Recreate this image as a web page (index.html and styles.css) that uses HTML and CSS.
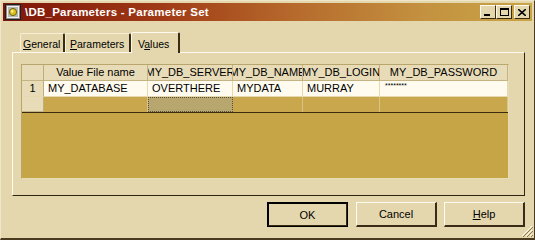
FILE: index.html
```html
<!DOCTYPE html>
<html lang="en">
<head>
    <meta charset="UTF-8" />
    <title>\DB_Parameters - Parameter Set</title>
    <link rel="stylesheet" href="styles.css">
</head>
<body>
    <div class="window">
        <div class="titlebar">
            <svg class="app-icon" width="16" height="16" viewBox="0 0 16 16">
                <rect x="0.5" y="0.5" width="15" height="15" fill="#8a8a8a" stroke="#202020"/>
                <rect x="2.5" y="2.5" width="11" height="11" fill="#b8b8b8" stroke="#f0f0f0"/>
                <circle cx="8" cy="8" r="3.6" fill="#e0c020" stroke="#6a6a10"/>
                <circle cx="7.2" cy="7.2" r="1.2" fill="#fff4a0"/>
            </svg>
            <span class="title">\DB_Parameters - Parameter Set</span>
            <div class="controls">
                <span class="ctl ctl-min"><i></i></span>
                <span class="ctl ctl-max"><i></i></span>
                <span class="ctl ctl-close">
                    <svg width="8" height="7" viewBox="0 0 8 7"><path d="M0 0 L8 7 M8 0 L0 7" stroke="#000" stroke-width="1.6"/></svg>
                </span>
            </div>
        </div>

        <div class="tabs">
            <div class="tab tab-general"><u>G</u>eneral</div>
            <div class="tab tab-params"><u>P</u>arameters</div>
            <div class="tab tab-values active">V<u>a</u>lues</div>
        </div>

        <div class="panel">
            <div class="grid">
                <div class="grid-row head">
                    <div class="cell rh"></div>
                    <div class="cell"><span>Value File name</span></div>
                    <div class="cell"><span>MY_DB_SERVER</span></div>
                    <div class="cell"><span>MY_DB_NAME</span></div>
                    <div class="cell"><span>MY_DB_LOGIN</span></div>
                    <div class="cell"><span>MY_DB_PASSWORD</span></div>
                </div>
                <div class="grid-row data">
                    <div class="cell rh">1</div>
                    <div class="cell">MY_DATABASE</div>
                    <div class="cell">OVERTHERE</div>
                    <div class="cell">MYDATA</div>
                    <div class="cell">MURRAY</div>
                    <div class="cell pwd">********</div>
                </div>
                <div class="grid-row newrow">
                    <div class="cell rh"></div>
                    <div class="cell"></div>
                    <div class="cell focus"></div>
                    <div class="cell"></div>
                    <div class="cell"></div>
                    <div class="cell"></div>
                </div>
                <div class="grid-empty"></div>
            </div>
        </div>

        <div class="buttons">
            <button class="btn default">OK</button>
            <button class="btn">Cancel</button>
            <button class="btn"><u>H</u>elp</button>
        </div>

        <svg class="grip" width="12" height="12" viewBox="0 0 12 12">
            <path d="M11 1 L1 11 M11 5 L5 11 M11 9 L9 11" stroke="#fffaf0" stroke-width="1"/>
            <path d="M12 2 L2 12 M12 6 L6 12 M12 10 L10 12" stroke="#8a7a50" stroke-width="1"/>
        </svg>
    </div>
</body>
</html>
```

FILE: styles.css
```css
* {
    margin: 0;
    padding: 0;
    box-sizing: border-box;
}

body {
    font-family: "Liberation Sans", Arial, sans-serif;
    font-size: 11px;
    background-color: #e4d7ae;
    color: #000;
    width: 535px;
    height: 240px;
    overflow: hidden;
}

.window {
    position: relative;
    width: 535px;
    height: 240px;
    background-color: #e4d7ae;
    border-top: 1px solid #efe6c8;
    border-left: 1px solid #efe6c8;
    border-right: 1px solid #4a3a20;
    border-bottom: 2px solid #4a3a20;
    padding: 2px 2px 0 2px;
}

/* title bar */
.titlebar {
    height: 18px;
    display: flex;
    align-items: center;
    padding-left: 2px;
    background: linear-gradient(to right, #7e1408 0%, #a03a16 30%, #b66a2c 55%, #c49240 80%, #c9a446 100%);
    color: #fff;
}

.app-icon {
    flex: none;
}

.title {
    font-weight: bold;
    font-size: 11.5px;
    margin-left: 4px;
    letter-spacing: 0.25px;
}

.controls {
    margin-left: auto;
    display: flex;
    margin-right: 2px;
}

.ctl {
    width: 16px;
    height: 14px;
    background-color: #e4d7ae;
    border-top: 1px solid #fffaf0;
    border-left: 1px solid #fffaf0;
    border-right: 1px solid #3a2c14;
    border-bottom: 1px solid #3a2c14;
    display: flex;
    align-items: center;
    justify-content: center;
    position: relative;
}

.ctl-max {
    margin-right: 2px;
}

.ctl-min i {
    display: block;
    width: 6px;
    height: 2px;
    background: #000;
    margin-top: 6px;
    margin-left: -2px;
}

.ctl-max i {
    display: block;
    width: 9px;
    height: 8px;
    border: 1px solid #000;
    border-top-width: 2px;
}

/* tabs */
.tabs {
    display: flex;
    align-items: flex-end;
    height: 21px;
    margin-top: 10px;
    padding-left: 17px;
}

.tab {
    height: 19px;
    padding: 3px 0 0 2px;
    border-top: 1px solid #f6eed6;
    border-left: 1px solid #f6eed6;
    border-right: 2px solid #3a2c14;
    border-radius: 2px 2px 0 0;
    line-height: 14px;
    white-space: nowrap;
    font-size: 10.5px;
}

.tab-general {
    width: 45px;
}

.tab-params {
    width: 66px;
    padding-left: 4px;
}

.tab-values {
    width: 49px;
}

.tab.active {
    height: 21px;
    padding-top: 4px;
    padding-left: 6px;
    margin-bottom: -1px;
    position: relative;
    background-color: #e4d7ae;
    border-top: 1px solid #fffaf0;
    border-left: 1px solid #fffaf0;
}

/* panel */
.panel {
    margin-left: 9px;
    width: 513px;
    height: 144px;
    border-top: 1px solid #fffaf0;
    border-left: 1px solid #fffaf0;
    border-right: 1px solid #2e2410;
    border-bottom: 1px solid #2e2410;
    padding: 11px 0 0 8px;
}

.grid {
    width: 488px;
    height: 115px;
    border: 1px solid #e8dcb4;
    border-top-color: #b8a66c;
    border-left-color: #b8a66c;
    background-color: #c5a545;
    display: flex;
    flex-direction: column;
}

.grid-row {
    display: grid;
    grid-template-columns: 22px 104px 85px 70px 77px 128px;
    height: 16px;
}

.cell {
    overflow: hidden;
    white-space: nowrap;
    border-right: 1px solid #e6d9ae;
    padding-left: 4px;
    line-height: 15px;
}

.head .cell {
    background-color: #e8dcb8;
    border-right: 1px solid #c4b484;
    border-bottom: 1px solid #c4b484;
    display: flex;
    justify-content: center;
    padding: 0;
}

.rh {
    background-color: #e8dcb8;
    border-right: 1px solid #bfae7c !important;
    border-bottom: 1px solid #c4b484;
    text-align: center;
    padding: 0 !important;
}

.data {
    background-color: #fffcef;
}

.data .cell {
    border-bottom: 1px solid #e6d9ae;
}

.data .pwd {
    font-size: 7px;
    line-height: 10px;
    padding-left: 5px;
}

.newrow {
    height: 16px;
    background-color: #c9a74c;
    border-bottom: 1px solid #3a2a10;
}

.newrow .cell {
    border-right: 1px solid #d8c487;
}

.newrow .focus {
    background-color: #b7a66e;
    border: 1px dotted #5a5040;
}

.grid-empty {
    flex: 1;
}

/* buttons */
.buttons {
    display: flex;
    justify-content: flex-end;
    gap: 7px;
    margin-top: 6px;
    padding-right: 7px;
}

.btn {
    width: 81px;
    height: 25px;
    font-family: "Liberation Sans", Arial, sans-serif;
    font-size: 11px;
    background-color: #e4d7ae;
    border-top: 1px solid #fffaf0;
    border-left: 1px solid #fffaf0;
    border-right: 2px solid #3a2c14;
    border-bottom: 2px solid #3a2c14;
    color: #000;
}

.btn.default {
    outline: 1px solid #000;
    outline-offset: -1px;
    border-top: 2px solid #000;
    border-left: 2px solid #000;
    margin-right: 1px;
}

.grip {
    position: absolute;
    right: 1px;
    bottom: 1px;
}
```
